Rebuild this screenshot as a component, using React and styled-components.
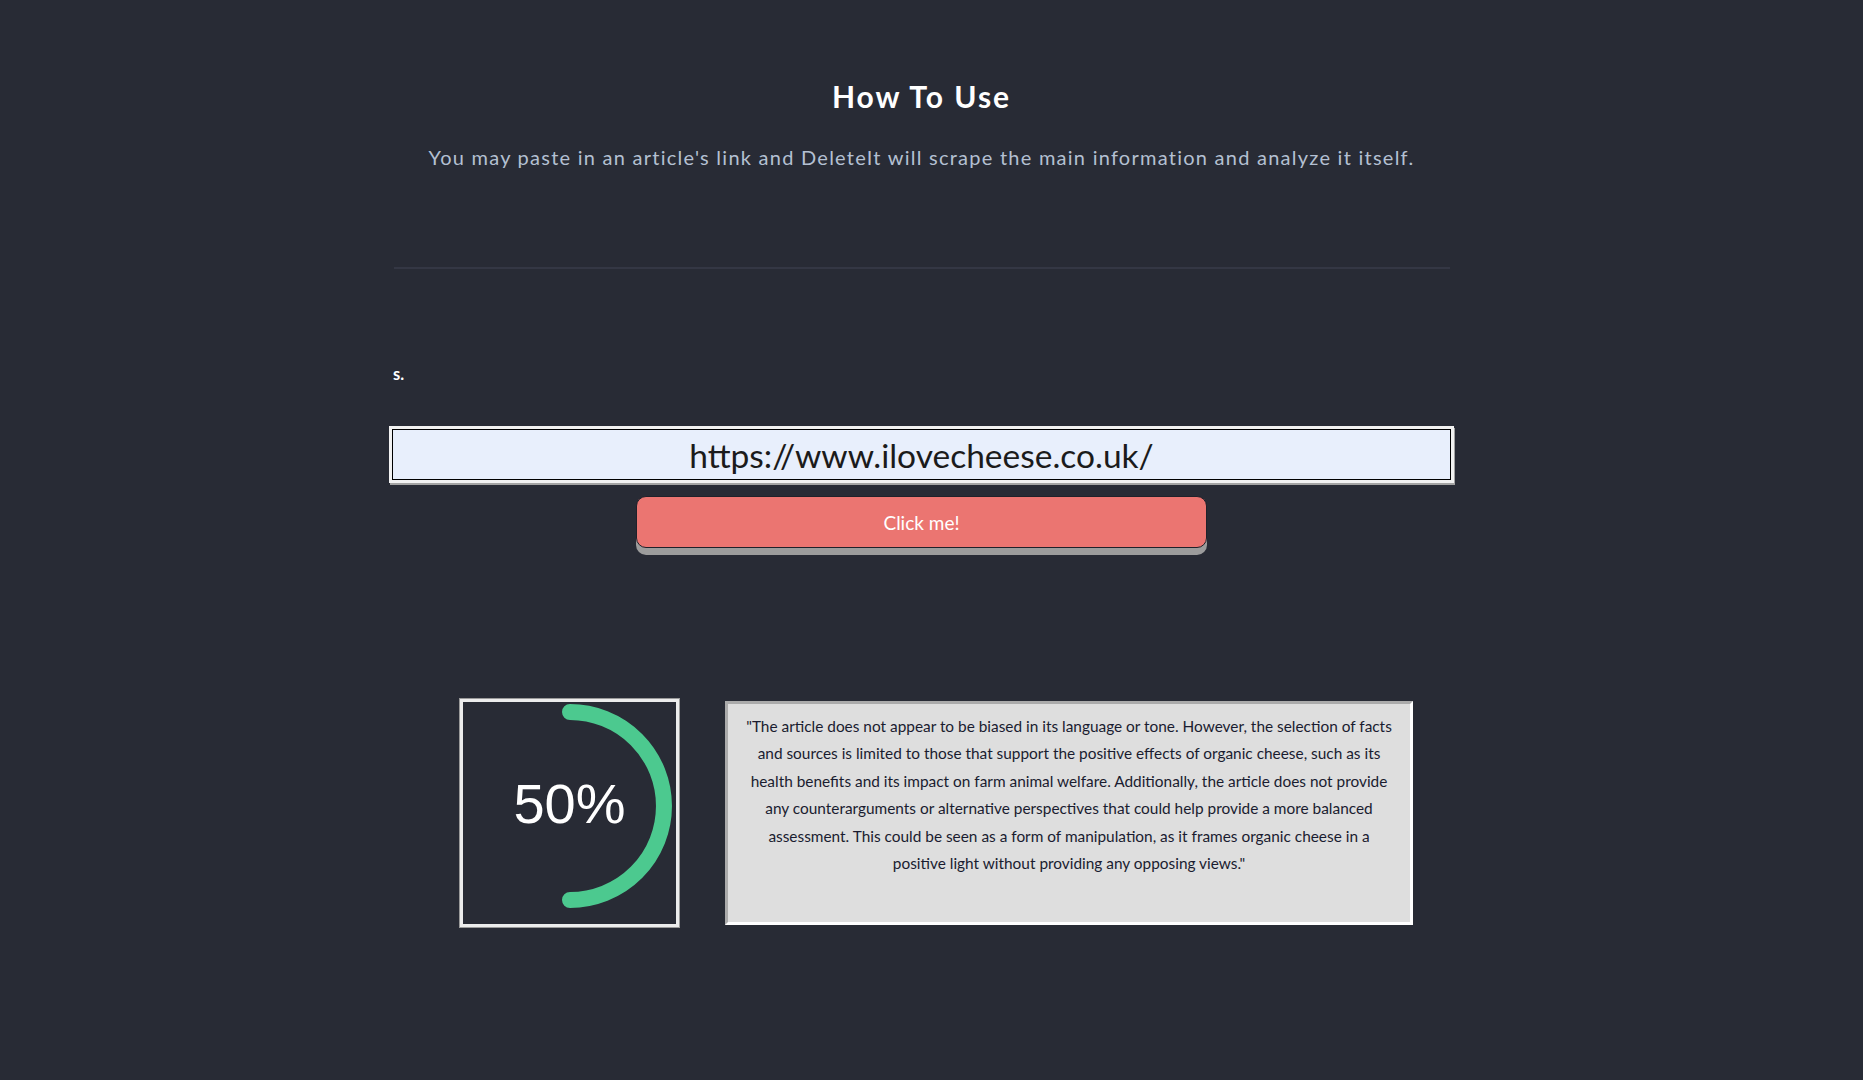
import styled, { createGlobalStyle } from "styled-components";

const Global = createGlobalStyle`
  html, body {
    margin: 0;
    padding: 0;
    background: #282b35;
  }
  body {
    font-family: Lato, "Noto Sans", sans-serif;
  }
`;

const Page = styled.div`
  min-height: 100vh;
  background: #282b35;
  padding-right: 20px;
  box-sizing: border-box;
`;

const Section = styled.section`
  width: 1065px;
  margin: 0 auto;
  display: flex;
  flex-direction: column;
  align-items: center;
  padding-top: 78px;
`;

const Title = styled.h2`
  margin: 0;
  font-size: 30px;
  line-height: 36px;
  font-weight: 700;
  letter-spacing: 2px;
  color: #ffffff;
`;

const Subtitle = styled.p`
  margin: 30px 0 0;
  font-size: 20px;
  line-height: 26px;
  letter-spacing: 1.25px;
  color: #b4c0d2;
`;

const Divider = styled.hr`
  width: 1056px;
  border: none;
  border-top: 2px solid #343744;
  margin: 97px 0 0;
`;

const Label = styled.div`
  align-self: flex-start;
  margin: 95px 0 0 4px;
  font-size: 16.5px;
  font-weight: 700;
  color: #ffffff;
`;

const UrlInput = styled.input`
  box-sizing: border-box;
  width: 1065px;
  height: 57px;
  margin-top: 42px;
  border: 3px solid #f2f2f2;
  box-shadow: inset 0 0 0 1px #000, 1px 2px 0 #a3a3a3;
  background: #e8effc;
  color: #1b1b1b;
  font-family: Lato, "Noto Sans", sans-serif;
  font-size: 33.5px;
  text-align: center;
  outline: none;
`;

const Button = styled.button`
  width: 571px;
  height: 52px;
  margin-top: 13px;
  border: 1px solid #1f212a;
  border-radius: 10px;
  background: #eb7571;
  box-shadow: 0 7px 0 #9c9c9c;
  color: #ffffff;
  font-family: Lato, "Noto Sans", sans-serif;
  font-size: 19px;
  cursor: pointer;
`;

const ResultRow = styled.div`
  display: flex;
  align-items: flex-start;
  gap: 46px;
  margin: 151px 0 0 30px;
`;

const ScoreBox = styled.div`
  position: relative;
  box-sizing: border-box;
  width: 219px;
  height: 228px;
  border: 3px solid #ececec;
  box-shadow: 0 0 0 1px #9a9a9a;
  display: flex;
  align-items: center;
  justify-content: center;
`;

const Ring = styled.svg`
  position: absolute;
  inset: 0;
`;

const Percent = styled.span`
  position: relative;
  font-family: "Liberation Sans", Arial, sans-serif;
  font-size: 56px;
  color: #ffffff;
  margin-top: -20px;
`;

const Summary = styled.div`
  box-sizing: border-box;
  width: 688px;
  min-height: 224px;
  margin-top: 2px;
  padding: 9px 12px 14px;
  border: 3px inset #ffffff;
  background: #dedede;
  color: #1a1c30;
  font-size: 15.4px;
  line-height: 27.4px;
  text-align: center;
`;

const summaryText =
  '"The article does not appear to be biased in its language or tone. However, the selection of facts and sources is limited to those that support the positive effects of organic cheese, such as its health benefits and its impact on farm animal welfare. Additionally, the article does not provide any counterarguments or alternative perspectives that could help provide a more balanced assessment. This could be seen as a form of manipulation, as it frames organic cheese in a positive light without providing any opposing views."';

const App = () => {
  const cx = 107;
  const cy = 104;
  const r = 94;
  return (
    <Page>
      <Global />
      <Section>
        <Title>How To Use</Title>
        <Subtitle>
          You may paste in an article's link and DeleteIt will scrape the main information and analyze it itself.
        </Subtitle>
        <Divider />
        <Label>s.</Label>
        <UrlInput defaultValue="https://www.ilovecheese.co.uk/" />
        <Button>Click me!</Button>
        <ResultRow>
          <ScoreBox>
            <Ring width="213" height="222" viewBox="0 0 213 222">
              <path
                d={`M ${cx} ${cy - r} A ${r} ${r} 0 0 1 ${cx} ${cy + r}`}
                fill="none"
                stroke="#4cc98f"
                strokeWidth="16"
                strokeLinecap="round"
              />
            </Ring>
            <Percent>50%</Percent>
          </ScoreBox>
          <Summary>{summaryText}</Summary>
        </ResultRow>
      </Section>
    </Page>
  );
};

export default App;
